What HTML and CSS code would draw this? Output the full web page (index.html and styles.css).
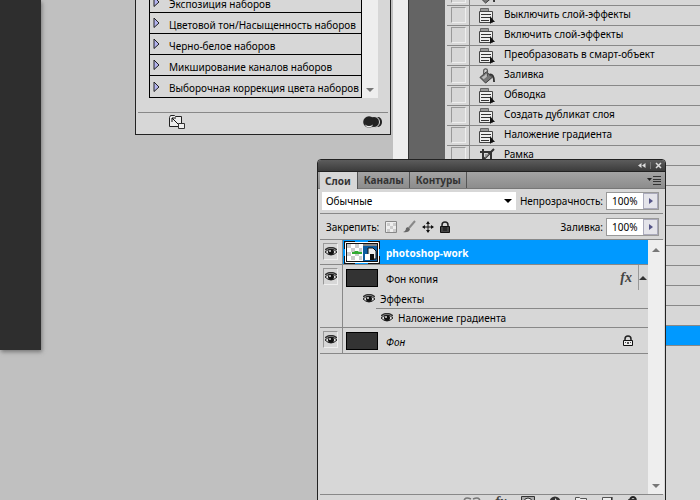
FILE: index.html
```
<!DOCTYPE html>
<html lang="ru">
<head>
<meta charset="utf-8">
<title>Слои</title>
<link rel="stylesheet" href="styles.css">
</head>
<body>
<svg class="defs" aria-hidden="true">
  <symbol id="cmd" viewBox="0 0 16 16">
    <path d="M1.500 3.500V.5h8v3" fill="#999" stroke="#666"/>
    <path d="M.5 3.500h13v11H.5z" fill="#eee" stroke="#444"/>
    <path d="M2 6.500h10M2 9.500h9M2 12.500h8" stroke="#333"/>
    <path d="M11 8v8l2-2h3z" fill="#111"/>
  </symbol>
  <symbol id="bucket" viewBox="0 0 17 17">
    <path d="M1 10l7-6 6 6-7 6z" fill="#777" stroke="#333"/>
    <path d="M3 10l5-4 2 2-5 4z" fill="#bbb"/>
    <path d="M5 8V3q0-2 2-2t2 2v6" fill="none" stroke="#555" stroke-width="1.300"/>
    <path d="M11 7q5-1 5 8" fill="none" stroke="#333" stroke-width="2"/>
  </symbol>
  <symbol id="crop" viewBox="0 0 16 16">
    <path d="M4 1v11h11M1 4h11v11M3 13L15 1" fill="none" stroke="#333" stroke-width="2"/>
    <path d="M6 6h4l-4 4z" fill="#999"/>
  </symbol>
  <symbol id="eye" viewBox="0 0 12 10">
    <path d="M0 5q6-6 12 0-6 6-12 0z" fill="#ddd" stroke="#222"/>
    <circle cx="6" cy="5" r="3" fill="#111"/>
    <circle cx="5" cy="4" r="1" fill="#ddd"/>
    <path d="M0 3q6-5 12 0" fill="none" stroke="#333" stroke-width="1.500"/>
  </symbol>
</svg>
<main class="desktop">
  <div class="canvas"></div>
  <div class="strip"></div>

  <section class="presets" aria-label="Наборы">
    <div class="presets-body">
      <ul class="preset-list">
        <li><svg class="tri" viewBox="0 0 7 12"><path d="M1 1v9.500L6 6z"/></svg>Экспозиция наборов</li>
        <li><svg class="tri" viewBox="0 0 7 12"><path d="M1 1v9.500L6 6z"/></svg>Цветовой тон/Насыщенность наборов</li>
        <li><svg class="tri" viewBox="0 0 7 12"><path d="M1 1v9.500L6 6z"/></svg>Черно-белое наборов</li>
        <li><svg class="tri" viewBox="0 0 7 12"><path d="M1 1v9.500L6 6z"/></svg>Микширование каналов наборов</li>
        <li><svg class="tri" viewBox="0 0 7 12"><path d="M1 1v9.500L6 6z"/></svg>Выборочная коррекция цвета наборов</li>
      </ul>
      <div class="scroll scroll-end"><i class="arrow-down"></i></div>
    </div>
    <footer class="presets-foot">
      <svg width="16" height="14" viewBox="0 0 16 14"><path d="M.5 11.500V2.500l1-2h4l1 1h6v10z" fill="#eee" stroke="#222"/><path d="M3 3l6 6M3 7V3h4" fill="none" stroke="#111"/><path d="M9.500 8.500h6v5h-6z" fill="#eee" stroke="#333"/></svg>
      <svg width="20" height="15" viewBox="0 0 20 15"><ellipse cx="15" cy="7" rx="4" ry="5" fill="#222"/><circle cx="11" cy="7" r="5.500" fill="#222" stroke="#ddd"/><circle cx="6" cy="7" r="5.800" fill="#222"/><path d="M2 9.500q4 3 8 0-1 3-4 3t-4-3z" fill="#eee"/></svg>
    </footer>
  </section>

  <ul class="history">
    <li><span class="slot"><i></i></span><svg class="act"><use href="#bucket"/></svg></li>
    <li><span class="slot"><i></i></span><svg class="act"><use href="#cmd"/></svg><span class="step">Выключить слой-эффекты</span></li>
    <li><span class="slot"><i></i></span><svg class="act"><use href="#cmd"/></svg><span class="step">Включить слой-эффекты</span></li>
    <li><span class="slot"><i></i></span><svg class="act"><use href="#cmd"/></svg><span class="step">Преобразовать в смарт-объект</span></li>
    <li><span class="slot"><i></i></span><svg class="act"><use href="#bucket"/></svg><span class="step">Заливка</span></li>
    <li><span class="slot"><i></i></span><svg class="act"><use href="#cmd"/></svg><span class="step">Обводка</span></li>
    <li><span class="slot"><i></i></span><svg class="act"><use href="#cmd"/></svg><span class="step">Создать дубликат слоя</span></li>
    <li><span class="slot"><i></i></span><svg class="act"><use href="#cmd"/></svg><span class="step">Наложение градиента</span></li>
    <li><span class="slot"><i></i></span><svg class="act"><use href="#crop"/></svg><span class="step">Рамка</span></li>
    <li></li><li></li><li></li><li></li><li></li><li></li><li></li><li></li>
    <li class="current"></li>
  </ul>

  <section class="layers" aria-label="Слои">
    <header class="titlebar">
      <button aria-label="Свернуть"><svg width="8" height="7" viewBox="0 0 8 7"><path d="M3.500 1v5L0 3.500zM7.500 1v5L4 3.500z" fill="#ddd"/></svg></button>
      <button class="close" aria-label="Закрыть"><svg width="7" height="7" viewBox="0 0 7 7"><path d="M1 1l5 5M6 1L1 6" stroke="#ddd" stroke-width="1.500"/></svg></button>
    </header>
    <nav class="tabs">
      <button class="active">Слои</button>
      <button>Каналы</button>
      <button>Контуры</button>
      <button class="menu" aria-label="Меню"><svg width="14" height="9" viewBox="0 0 14 9"><path d="M0 2h5L2.500 5z" fill="#222"/><path d="M6 .5h8M6 3.500h8M6 5.500h8M6 8.500h8" stroke="#333"/></svg></button>
    </nav>
    <div class="bar blend">
      <span class="select-box">
        <select aria-label="Режим"><option>Обычные</option></select>
        <i class="caret"></i>
      </span>
      <label for="opacity">Непрозрачность:</label>
      <span class="field"><input id="opacity" value="100%"><button aria-label="Изменить непрозрачность"><i class="arrow-right"></i></button></span>
    </div>
    <div class="bar lock">
      <span>Закрепить:</span>
      <button aria-label="Прозрачность"><svg width="12" height="12" viewBox="0 0 12 12"><path d="M.5.5h11v11H.5z" fill="#eee" stroke="#888"/><path d="M2 2h3v3H2zM8 2h3v3H8zM5 5h3v3H5zM2 8h3v3H2zM8 8h3v3H8z" fill="#ccc"/></svg></button>
      <button aria-label="Пиксели"><svg width="13" height="13" viewBox="0 0 13 13"><path d="M12 1L6 8" stroke="#888" stroke-width="2"/><path d="M0 12q3-1 3-4l2-1 2 2q-1 4-7 3z" fill="#666"/></svg></button>
      <button aria-label="Положение"><svg width="12" height="12" viewBox="0 0 12 12"><path d="M6 1v10M1 6h10" stroke="#111"/><path d="M6 0l2 3H4zM6 12l2-3H4zM0 6l3-2v4zM12 6L9 4v4z" fill="#111"/></svg></button>
      <button aria-label="Все"><svg width="10" height="12" viewBox="0 0 10 12"><path d="M2 6V4q0-3 3-3t3 3v2" fill="none" stroke="#222" stroke-width="1.500"/><path d="M.5 5.500h9v6h-9z" fill="#444" stroke="#111"/><path d="M3 7h4M3 9h4" stroke="#111"/></svg></button>
      <label for="fill">Заливка:</label>
      <span class="field"><input id="fill" value="100%"><button aria-label="Изменить заливку"><i class="arrow-right"></i></button></span>
    </div>
    <div class="layer-area">
      <ul class="layer-list">
        <li class="layer selected">
          <span class="vis"><i><svg class="eye"><use href="#eye"/></svg></i></span>
          <svg class="smart" width="36" height="23" viewBox="0 0 36 23"><path d="M0 0h36v23H0z" fill="#111"/><path d="M11 0h13v1H11zM11 22h13v1H11zM0 8h1v7H0zM35 8h1v7h-1z" fill="#09f"/><path d="M1.500 1.500h33v20h-33z" fill="#111" stroke="#fff"/><path d="M3 3h30v17H3z" fill="#fff"/><path d="M3 3h4v4H3zM11 3h4v4h-4zM7 7h4v4H7zM15 7h3v4h-3zM3 11h4v4H3zM11 11h4v4h-4zM7 15h4v4H7zM15 15h3v4h-3z" fill="#ccc"/><path d="M8 11h2l1-1h3l1 1h3v2H8z" fill="#3a3"/><path d="M19 5h14v15H19z" fill="#0d5ca0"/><path d="M19 4h14" stroke="#111"/><path d="M24 7h5l3 3v8h-8z" fill="#eee" stroke="#111"/><path d="M21 13h5v6h-5z" fill="#fff"/><path d="M26 13h4v6h-4z" fill="#111"/></svg>
          <span class="name">photoshop-work</span>
        </li>
        <li class="group">
          <span class="vis"><i><svg class="eye"><use href="#eye"/></svg></i></span>
          <div class="group-body">
            <div class="group-head">
              <span class="thumb"></span><span class="name">Фон копия</span>
              <span class="fx">fx</span><button class="fold" aria-label="Свернуть эффекты"><i class="arrow-up"></i></button>
            </div>
            <div class="effects"><svg class="eye"><use href="#eye"/></svg>Эффекты</div>
            <div class="effect"><svg class="eye"><use href="#eye"/></svg>Наложение градиента</div>
          </div>
        </li>
        <li class="layer base">
          <span class="vis"><i><svg class="eye"><use href="#eye"/></svg></i></span>
          <span class="thumb"></span><em class="name">Фон</em>
          <svg class="padlock" width="10" height="12" viewBox="0 0 10 12"><path d="M2 5V4q0-3 3-3t3 3v1" fill="none" stroke="#222" stroke-width="1.500"/><path d="M.5 5.500h9v5h-9z" fill="#eee" stroke="#111"/><path d="M2 7h1v1H2zM4 7h2v2H4zM7 7h1v1H7z" fill="#555"/></svg>
        </li>
      </ul>
      <div class="scroll"><i class="arrow-up"></i><i class="arrow-down"></i></div>
    </div>
    <footer class="layers-foot">
      <svg width="18" height="12" viewBox="0 0 18 12"><path d="M8 3Q1 0 1 6t7 3M10 3q7-3 7 3t-7 3M6 6h6" fill="none" stroke="#777" stroke-width="1.500"/></svg>
      <span class="fx">fx</span>
      <svg width="14" height="12" viewBox="0 0 14 12"><path d="M.5.5h13v11H.5z" fill="#aaa" stroke="#333"/><circle cx="7" cy="6" r="4" fill="#eee" stroke="#333"/></svg>
      <svg width="12" height="12" viewBox="0 0 12 12"><circle cx="6" cy="6" r="5.500" fill="#333"/><path d="M6 2v9q5-4 0-9z" fill="#ddd"/></svg>
      <svg width="12" height="12" viewBox="0 0 12 12"><path d="M.5 11.500V1.500h4l1 1h6v9z" fill="#eee" stroke="#555"/></svg>
      <svg width="12" height="12" viewBox="0 0 12 12"><path d="M1.500 1.500h9v10h-9z" fill="#eee" stroke="#555"/><path d="M11 1v8" stroke="#111"/></svg>
      <svg width="12" height="12" viewBox="0 0 12 12"><path d="M1.500 3.500h8v8h-8z" fill="#ddd" stroke="#333"/><path d="M3 3q3-4 6 0" fill="none" stroke="#222" stroke-width="2"/></svg>
    </footer>
  </section>
</main>
</body>
</html>
```
FILE: styles.css
```
* { box-sizing: border-box; }
body { margin: 0; font: 10px/14px "Noto Sans", "DejaVu Sans", sans-serif; color: #000; }
ul { margin: 0; padding: 0; list-style: none; }
svg { display: block; flex: none; }
button, input, select { margin: 0; padding: 0; border: 0; background: none; font: inherit; color: inherit; border-radius: 0; }
.defs { position: absolute; width: 0; height: 0; }
.desktop { position: relative; height: 100vh; overflow: hidden; background: #c0c0c0; }

/* windows placed on the desktop */
.canvas { position: absolute; left: 0; top: 0; width: 41px; height: 350px; background: #2e2e2e; box-shadow: 1px 2px 4px #777; }
.strip { position: absolute; left: 393px; right: 0; top: 0; bottom: 0; border-left: 15px solid #eee; background: #646464; box-shadow: inset 1px 0 #333; }

.presets { position: absolute; left: 135px; top: -8px; width: 256px; padding: 0 2px; border: 1px solid #222; border-top: 0; background: #d7d7d7; }
.presets-body { display: flex; padding: 0 10px 14px 11px; }
.preset-list { flex: 1; border: 1px solid #000; border-top: 0; }
.preset-list li { display: flex; align-items: center; gap: 9px; height: 21px; padding: 3px 0 0 3px; border-bottom: 1px solid #000; white-space: nowrap; }
.preset-list li:last-child { border-bottom: 0; }
.tri { width: 7px; height: 12px; margin-bottom: 3px; fill: #b4b4f0; stroke: #222; }
.presets-foot { display: flex; justify-content: space-between; padding: 2px 5px 4px 31px; border-top: 1px solid #888; }

.scroll { display: flex; flex: none; flex-direction: column; align-items: center; justify-content: space-between; width: 16px; padding: 8px 0 6px; background: #eee; }
.scroll-end { justify-content: flex-end; }
.arrow-up, .arrow-down, .arrow-right, .caret { display: block; width: 0; height: 0; border: 4px solid transparent; }
.arrow-up { border-top: 0; border-bottom-color: #777; }
.arrow-down { border-bottom: 0; border-top-color: #777; }
.arrow-right { border-width: 3px; border-left: 4px solid #558; border-right: 0; }

.history { position: absolute; left: 445px; right: 0; top: -14px; bottom: 0; padding-left: 2px; background: #d7d7d7; }
.history li { display: flex; align-items: center; height: 20px; border-bottom: 1px solid #888; white-space: nowrap; }
.history li.current { background: #09f; }
.slot { align-self: stretch; flex: none; width: 23px; margin-right: 9px; padding: 1px 3px 2px 4px; border-right: 1px solid #888; }
.slot i { display: block; height: 16px; border: 1px solid #eee; border-top-color: #999; border-left-color: #999; }
.act { width: 16px; height: 16px; margin-right: 9px; }
.step { padding-bottom: 3px; }

.layers { position: absolute; left: 317px; top: 159px; bottom: -14px; width: 349px; display: flex; flex-direction: column; border: 1px solid #222; border-radius: 4px 4px 0 0; background: #d7d7d7; overflow: hidden; }
.titlebar { display: flex; justify-content: flex-end; align-items: center; gap: 4px; height: 12px; flex: none; padding-right: 3px; border-bottom: 1px solid #222; background: linear-gradient(#5c5c5c, #3c3c3c); }
.titlebar .close { padding-left: 4px; border-left: 1px solid #777; }
.tabs { display: flex; height: 17px; flex: none; padding-left: 2px; background: linear-gradient(#a4a4a4, #8c8c8c); border-bottom: 1px solid #777; }
.tabs button { padding: 0 5px 0 6px; border-right: 1px solid #555; font-weight: bold; color: #333; }
.tabs .active { height: 17px; padding: 0 6px 0 5px; background: #d7d7d7; }
.tabs .menu { margin-left: auto; padding: 0 4px; border: 0; }
.bar { display: flex; align-items: center; flex: none; height: 25px; margin: 0 2px; border-bottom: 1px solid #888; }
.select-box { display: flex; align-items: center; flex: 1; height: 18px; margin: 0 4px 0 2px; background: #fff; }
.select-box select { flex: 1; appearance: none; height: 18px; padding-left: 4px; }
.caret { margin-right: 4px; border-bottom: 0; border-top-color: #000; }
.field { display: flex; height: 18px; margin: 0 4px 0 3px; border: 1px solid #999; background: #fff; }
.field input { width: 36px; padding-left: 5px; }
.field button { width: 15px; padding-left: 5px; border: 1px solid #aab; background: #e4e4ea; }
.lock { gap: 6px; height: 26px; padding-left: 6px; }
.lock label { margin-left: auto; }
.lock .field { margin-left: -3px; }

.layer-area { display: flex; flex: 1; margin: 0 1px 0 2px; }
.layer-list { flex: 1; }
.layer { display: flex; align-items: center; height: 25px; border-bottom: 1px solid #888; }
.vis { align-self: stretch; flex: none; width: 23px; padding: 3px 4px 0 3px; border-right: 1px solid #888; background: #d7d7d7; }
.vis i { display: block; height: 17px; padding: 3px 1px; border: 1px solid #eee; border-top-color: #999; border-left-color: #999; }
.eye { width: 12px; height: 10px; }
.smart { margin-left: 1px; }
.name { margin-left: 6px; padding-top: 2px; }
.selected { background: #09f; color: #fff; font-weight: bold; }
.group { display: flex; border-bottom: 1px solid #888; }
.group-body { flex: 1; }
.group-head { display: flex; align-items: center; height: 25px; }
.thumb { width: 32px; height: 18px; margin-left: 3px; border: 1px solid #000; background: #333; }
.group-head .name, .base .name { margin-left: 8px; }
.fx { font: italic bold 14px/16px "Liberation Serif", serif; color: #444; }
.group-head .fx { margin-left: auto; padding-right: 6px; }
.fold { align-self: stretch; width: 10px; border-left: 1px solid #999; }
.fold .arrow-up { border-bottom-color: #333; }
.effects { display: flex; align-items: center; gap: 5px; height: 18px; padding-left: 20px; }
.effect { display: flex; align-items: center; gap: 5px; height: 19px; margin-left: 33px; padding-left: 5px; border-top: 1px solid #888; }
.base { height: 26px; }
.padlock { margin: 0 15px 0 auto; }
.layers-foot { display: flex; flex: none; justify-content: space-between; height: 19px; margin: 0 2px; padding: 1px 24px 0 143px; border-top: 1px solid #888; }
.layers-foot .fx { line-height: 12px; }
```
